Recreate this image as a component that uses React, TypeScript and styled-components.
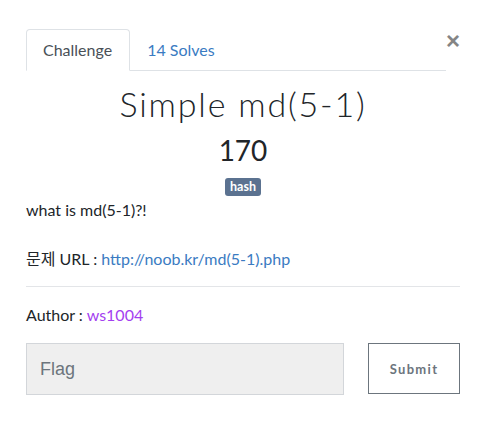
import React from "react";
import styled, { createGlobalStyle } from "styled-components";

const Global = createGlobalStyle`
  html, body { margin: 0; padding: 0; background: #fff; }
  body { font-family: Lato, "Noto Sans CJK KR", sans-serif; color: #212529; }
  * { box-sizing: border-box; }
`;

const Modal = styled.div`
  width: 487px;
  height: 439px;
  padding: 29px 27px 0 26px;
  display: flex;
  flex-direction: column;
`;

const TopRow = styled.div`
  display: flex;
  align-items: flex-start;
`;

const Nav = styled.div`
  flex: 0 0 420px;
  display: flex;
  border-bottom: 1px solid #dee2e6;
`;

const Tab = styled.div<{ $active?: boolean }>`
  padding: 8px 17px 8px 16px;
  font-size: 16px;
  line-height: 24px;
  margin-bottom: -1px;
  border: 1px solid ${(p) => (p.$active ? "#dee2e6" : "transparent")};
  border-bottom-color: ${(p) => (p.$active ? "#fff" : "transparent")};
  border-radius: 4px 4px 0 0;
  color: ${(p) => (p.$active ? "#495057" : "#3a7bc2")};
  background: ${(p) => (p.$active ? "#fff" : "transparent")};
`;

const Close = styled.div`
  margin-left: auto;
  font-family: "Liberation Sans", Arial, sans-serif;
  font-size: 24px;
  font-weight: 700;
  line-height: 24px;
  color: #858585;
`;

const Title = styled.h2`
  margin: 13px 0 0;
  text-align: center;
  font-family: Lato, sans-serif;
  font-weight: 300;
  font-size: 34px;
  line-height: 40px;
  letter-spacing: 1.8px;
  color: #212529;
`;

const Points = styled.h3`
  margin: 9px 0 0;
  text-align: center;
  font-weight: 400;
  font-size: 28px;
  line-height: 34px;
  color: #212529;
`;

const Tags = styled.div`
  display: flex;
  justify-content: center;
  margin-top: 11px;
`;

const Badge = styled.span`
  background: #5b7290;
  color: #fff;
  font-weight: 700;
  font-size: 12.5px;
  line-height: 12px;
  padding: 3px 5px;
  border-radius: 3px;
`;

const Desc = styled.div`
  margin-top: 2px;
  font-size: 16px;
  line-height: 24px;
`;

const Para = styled.p<{ $last?: boolean }>`
  margin: 0 0 ${(p) => (p.$last ? "15px" : "25px")};
`;

const Link = styled.a<{ $color?: string }>`
  color: ${(p) => p.$color || "#3a7bc2"};
  text-decoration: none;
`;

const Rule = styled.hr`
  margin: 0 0 16px;
  border: 0;
  border-top: 1px solid #e3e5e8;
  width: 434px;
`;

const Author = styled.div`
  font-size: 16px;
  line-height: 24px;
`;

const FormRow = styled.div`
  display: flex;
  margin-top: 16px;
  width: 434px;
  justify-content: space-between;
  align-items: flex-start;
`;

const FlagInput = styled.input`
  width: 318px;
  height: 52px;
  background: #efefef;
  border: 1px solid #d3d6da;
  padding: 0 13px;
  font-family: "Liberation Sans", Arial, sans-serif;
  font-size: 18px;
  color: #495057;
  outline: none;
  &::placeholder { color: #6c757d; }
`;

const SubmitBtn = styled.button`
  width: 92px;
  height: 51px;
  background: #fff;
  border: 1px solid #6c757d;
  font-family: Lato, sans-serif;
  font-weight: 700;
  font-size: 13px;
  letter-spacing: 1.3px;
  color: #6c757d;
  padding: 0;
`;

export default function App() {
  return (
    <>
      <Global />
      <Modal>
        <TopRow>
          <Nav>
            <Tab $active>Challenge</Tab>
            <Tab>14 Solves</Tab>
          </Nav>
          <Close>×</Close>
        </TopRow>
        <Title>Simple md(5-1)</Title>
        <Points>170</Points>
        <Tags>
          <Badge>hash</Badge>
        </Tags>
        <Desc>
          <Para>what is md(5-1)?!</Para>
          <Para $last>
            문제 URL : <Link href="#">http://noob.kr/md(5-1).php</Link>
          </Para>
        </Desc>
        <Rule />
        <Author>
          Author : <Link $color="#a43ff0" href="#">ws1004</Link>
        </Author>
        <FormRow>
          <FlagInput placeholder="Flag" />
          <SubmitBtn>Submit</SubmitBtn>
        </FormRow>
      </Modal>
    </>
  );
}
